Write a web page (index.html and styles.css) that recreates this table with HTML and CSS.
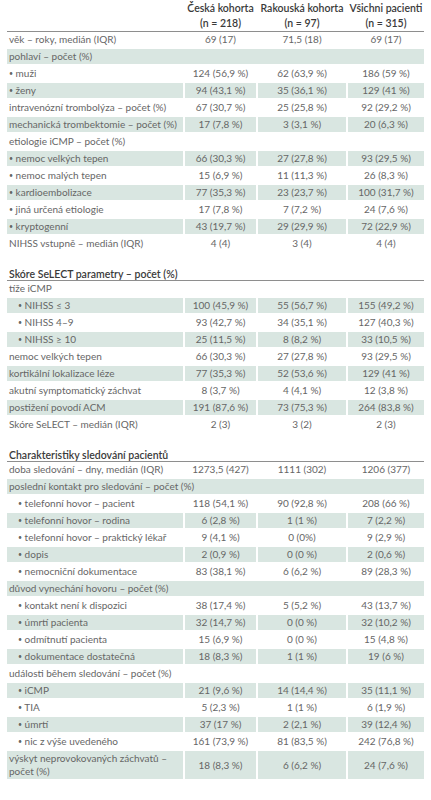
FILE: index.html
```html
<!DOCTYPE html>
<html lang="cs">
<head>
  <meta charset="UTF-8">
  <meta name="viewport" content="width=device-width, initial-scale=1.0">
  <title>Charakteristiky kohort</title>
  <link rel="stylesheet" href="styles.css">
</head>
<body>
  <div class="wrap">
    <table class="cohort">
      <colgroup>
        <col class="c-label">
        <col class="c-cz">
        <col class="c-at">
        <col class="c-all">
      </colgroup>

      <!-- Hlavička -->
      <thead>
        <tr class="head">
          <th></th>
          <th>Česká kohorta<br>(n = 218)</th>
          <th>Rakouská kohorta<br>(n = 97)</th>
          <th>Všichni pacienti<br>(n = 315)</th>
        </tr>
        <tr class="rule"><td colspan="4"></td></tr>
      </thead>

      <!-- Základní údaje -->
      <tbody>
        <tr>
          <td class="label">věk – roky, medián (IQR)</td>
          <td>69 (17)</td><td>71,5 (18)</td><td>69 (17)</td>
        </tr>
        <tr class="alt">
          <td class="label" colspan="4">pohlaví – počet (%)</td>
        </tr>
        <tr>
          <td class="label"><span class="dot">•</span> muži</td>
          <td>124 (56,9 %)</td><td>62 (63,9 %)</td><td>186 (59 %)</td>
        </tr>
        <tr class="alt">
          <td class="label"><span class="dot">•</span> ženy</td>
          <td>94 (43,1 %)</td><td>35 (36,1 %)</td><td>129 (41 %)</td>
        </tr>
        <tr>
          <td class="label">intravenózní trombolýza – počet (%)</td>
          <td>67 (30,7 %)</td><td>25 (25,8 %)</td><td>92 (29,2 %)</td>
        </tr>
        <tr class="alt">
          <td class="label">mechanická trombektomie – počet (%)</td>
          <td>17 (7,8 %)</td><td>3 (3,1 %)</td><td>20 (6,3 %)</td>
        </tr>
        <tr>
          <td class="label" colspan="4">etiologie iCMP – počet (%)</td>
        </tr>
        <tr class="alt">
          <td class="label"><span class="dot">•</span> nemoc velkých tepen</td>
          <td>66 (30,3 %)</td><td>27 (27,8 %)</td><td>93 (29,5 %)</td>
        </tr>
        <tr>
          <td class="label"><span class="dot">•</span> nemoc malých tepen</td>
          <td>15 (6,9 %)</td><td>11 (11,3 %)</td><td>26 (8,3 %)</td>
        </tr>
        <tr class="alt">
          <td class="label"><span class="dot">•</span> kardioembolizace</td>
          <td>77 (35,3 %)</td><td>23 (23,7 %)</td><td>100 (31,7 %)</td>
        </tr>
        <tr>
          <td class="label"><span class="dot">•</span> jiná určená etiologie</td>
          <td>17 (7,8 %)</td><td>7 (7,2 %)</td><td>24 (7,6 %)</td>
        </tr>
        <tr class="alt">
          <td class="label"><span class="dot">•</span> kryptogenní</td>
          <td>43 (19,7 %)</td><td>29 (29,9 %)</td><td>72 (22,9 %)</td>
        </tr>
        <tr>
          <td class="label">NIHSS vstupně – medián (IQR)</td>
          <td>4 (4)</td><td>3 (4)</td><td>4 (4)</td>
        </tr>
      </tbody>

      <!-- Skóre SeLECT -->
      <tbody>
        <tr class="section">
          <th colspan="4">Skóre SeLECT parametry – počet (%)</th>
        </tr>
        <tr>
          <td class="label" colspan="4">tíže iCMP</td>
        </tr>
        <tr class="alt">
          <td class="label sub"><span class="dot">•</span> NIHSS ≤ 3</td>
          <td>100 (45,9 %)</td><td>55 (56,7 %)</td><td>155 (49,2 %)</td>
        </tr>
        <tr>
          <td class="label sub"><span class="dot">•</span> NIHSS 4–9</td>
          <td>93 (42,7 %)</td><td>34 (35,1 %)</td><td>127 (40,3 %)</td>
        </tr>
        <tr class="alt">
          <td class="label sub"><span class="dot">•</span> NIHSS ≥ 10</td>
          <td>25 (11,5 %)</td><td>8 (8,2 %)</td><td>33 (10,5 %)</td>
        </tr>
        <tr>
          <td class="label">nemoc velkých tepen</td>
          <td>66 (30,3 %)</td><td>27 (27,8 %)</td><td>93 (29,5 %)</td>
        </tr>
        <tr class="alt">
          <td class="label">kortikální lokalizace léze</td>
          <td>77 (35,3 %)</td><td>52 (53,6 %)</td><td>129 (41 %)</td>
        </tr>
        <tr>
          <td class="label">akutní symptomatický záchvat</td>
          <td>8 (3,7 %)</td><td>4 (4,1 %)</td><td>12 (3,8 %)</td>
        </tr>
        <tr class="alt">
          <td class="label">postižení povodí ACM</td>
          <td>191 (87,6 %)</td><td>73 (75,3 %)</td><td>264 (83,8 %)</td>
        </tr>
        <tr>
          <td class="label">Skóre SeLECT – medián (IQR)</td>
          <td>2 (3)</td><td>3 (2)</td><td>2 (3)</td>
        </tr>
      </tbody>

      <!-- Sledování -->
      <tbody>
        <tr class="section">
          <th colspan="4">Charakteristiky sledování pacientů</th>
        </tr>
        <tr>
          <td class="label">doba sledování – dny, medián (IQR)</td>
          <td>1273,5 (427)</td><td>1111 (302)</td><td>1206 (377)</td>
        </tr>
        <tr class="alt">
          <td class="label" colspan="4">poslední kontakt pro sledování – počet (%)</td>
        </tr>
        <tr>
          <td class="label sub"><span class="dot">•</span> telefonní hovor – pacient</td>
          <td>118 (54,1 %)</td><td>90 (92,8 %)</td><td>208 (66 %)</td>
        </tr>
        <tr class="alt">
          <td class="label sub"><span class="dot">•</span> telefonní hovor – rodina</td>
          <td>6 (2,8 %)</td><td>1 (1 %)</td><td>7 (2,2 %)</td>
        </tr>
        <tr>
          <td class="label sub"><span class="dot">•</span> telefonní hovor – praktický lékař</td>
          <td>9 (4,1 %)</td><td>0 (0%)</td><td>9 (2,9 %)</td>
        </tr>
        <tr class="alt">
          <td class="label sub"><span class="dot">•</span> dopis</td>
          <td>2 (0,9 %)</td><td>0 (0 %)</td><td>2 (0,6 %)</td>
        </tr>
        <tr>
          <td class="label sub"><span class="dot">•</span> nemocniční dokumentace</td>
          <td>83 (38,1 %)</td><td>6 (6,2 %)</td><td>89 (28,3 %)</td>
        </tr>
        <tr class="alt">
          <td class="label" colspan="4">důvod vynechání hovoru – počet (%)</td>
        </tr>
        <tr>
          <td class="label sub"><span class="dot">•</span> kontakt není k dispozici</td>
          <td>38 (17,4 %)</td><td>5 (5,2 %)</td><td>43 (13,7 %)</td>
        </tr>
        <tr class="alt">
          <td class="label sub"><span class="dot">•</span> úmrtí pacienta</td>
          <td>32 (14,7 %)</td><td>0 (0 %)</td><td>32 (10,2 %)</td>
        </tr>
        <tr>
          <td class="label sub"><span class="dot">•</span> odmítnutí pacienta</td>
          <td>15 (6,9 %)</td><td>0 (0 %)</td><td>15 (4,8 %)</td>
        </tr>
        <tr class="alt">
          <td class="label sub"><span class="dot">•</span> dokumentace dostatečná</td>
          <td>18 (8,3 %)</td><td>1 (1 %)</td><td>19 (6 %)</td>
        </tr>
        <tr>
          <td class="label" colspan="4">události během sledování – počet (%)</td>
        </tr>
        <tr class="alt">
          <td class="label sub"><span class="dot">•</span> iCMP</td>
          <td>21 (9,6 %)</td><td>14 (14,4 %)</td><td>35 (11,1 %)</td>
        </tr>
        <tr>
          <td class="label sub"><span class="dot">•</span> TIA</td>
          <td>5 (2,3 %)</td><td>1 (1 %)</td><td>6 (1,9 %)</td>
        </tr>
        <tr class="alt">
          <td class="label sub"><span class="dot">•</span> úmrtí</td>
          <td>37 (17 %)</td><td>2 (2,1 %)</td><td>39 (12,4 %)</td>
        </tr>
        <tr>
          <td class="label sub"><span class="dot">•</span> nic z výše uvedeného</td>
          <td>161 (73,9 %)</td><td>81 (83,5 %)</td><td>242 (76,8 %)</td>
        </tr>
        <tr class="alt">
          <td class="label wrap-text">výskyt neprovokovaných záchvatů – počet (%)</td>
          <td>18 (8,3 %)</td><td>6 (6,2 %)</td><td>24 (7,6 %)</td>
        </tr>
      </tbody>
    </table>
  </div>
</body>
</html>
```

FILE: styles.css
```css
/* Obecné */
body {
  margin: 0;
  font-family: Lato, "Liberation Sans", Arial, sans-serif;
  font-size: 10px;
  font-variant-numeric: lining-nums;
  color: #666;
  background: #fff;
}

.wrap {
  padding: 0 5px;
}

/* Tabulka */
.cohort {
  width: 100%;
  table-layout: fixed;
  border-collapse: separate;
  border-spacing: 2px 0;
}

.c-label { width: 176px; }
.c-cz { width: 71px; }
.c-at { width: 88px; }
.c-all { width: 76px; }

.cohort th,
.cohort td {
  padding: 0;
}

.cohort td {
  line-height: 15px;
  text-align: center;
  white-space: nowrap;
  border-bottom: 2.4px solid transparent;
  background-clip: padding-box;
}

.cohort td.label {
  text-align: left;
  padding-left: 2px;
}

.cohort td.sub {
  padding-left: 11px;
}

.cohort td.wrap-text {
  white-space: normal;
  line-height: 13px;
  padding-top: 1px;
  padding-bottom: 1px;
}

.dot {
  font-size: 7px;
  vertical-align: 1px;
}

/* Zvýrazněné řádky */
.cohort tr.alt td {
  background-color: #d9e6e1;
}

/* Hlavička */
.cohort tr.head th {
  font-size: 10.5px;
  font-weight: 600;
  color: #3a3a3a;
  line-height: 14.5px;
  padding: 1px 0;
  text-align: center;
  white-space: nowrap;
  vertical-align: bottom;
}

.cohort tr.rule td {
  height: 0;
  line-height: 0;
  border-bottom: 0;
  border-top: 1px solid #8e8e8e;
}

/* Nadpisy oddílů */
.cohort tr.section th {
  font-size: 10.5px;
  font-weight: 600;
  color: #3a3a3a;
  text-align: left;
  line-height: 12px;
  padding: 15px 2px 0;
  border-bottom: 1px solid #8e8e8e;
}
```
